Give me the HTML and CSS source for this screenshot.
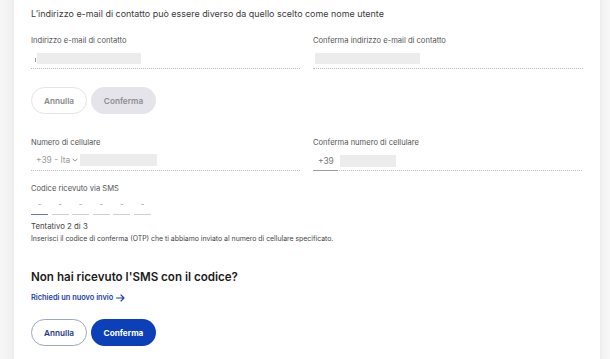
FILE: index.html
```html
<!DOCTYPE html>
<html lang="it">
<head>
<meta charset="utf-8">
<link rel="stylesheet" href="styles.css">
</head>
<body>
<div class="page">
  <div class="side-left"></div>
  <main class="card">
    <p class="intro">L’indirizzo e-mail di contatto può essere diverso da quello scelto come nome utente</p>

    <div class="row">
      <div class="field">
        <div class="label">Indirizzo e-mail di contatto</div>
        <div class="input"><span class="caret"></span><span class="mask mask-email"></span></div>
      </div>
      <div class="field">
        <div class="label">Conferma indirizzo e-mail di contatto</div>
        <div class="input"><span class="mask mask-email2"></span></div>
      </div>
    </div>

    <div class="actions first-actions">
      <button class="btn btn-outline-light">Annulla</button>
      <button class="btn btn-disabled">Conferma</button>
    </div>

    <div class="row phone-row">
      <div class="field">
        <div class="label">Numero di cellulare</div>
        <div class="input">
          <span class="prefix">+39 - Ita</span>
          <svg class="chev" width="6" height="4" viewBox="0 0 6 4"><path d="M0.5 0.7 L3 3.2 L5.5 0.7" fill="none" stroke="#888" stroke-width="0.9"/></svg>
          <span class="mask mask-phone"></span>
        </div>
      </div>
      <div class="field">
        <div class="label">Conferma numero di cellulare</div>
        <div class="input input-split">
          <span class="prefix prefix2">+39</span>
          <span class="mask mask-phone2"></span>
        </div>
      </div>
    </div>

    <div class="label sms-label">Codice ricevuto via SMS</div>
    <div class="otp">
      <span class="otp-box active">-</span>
      <span class="otp-box">-</span>
      <span class="otp-box">-</span>
      <span class="otp-box">-</span>
      <span class="otp-box">-</span>
      <span class="otp-box">-</span>
    </div>
    <div class="attempt">Tentativo 2 di 3</div>
    <div class="hint">Inserisci il codice di conferma (OTP) che ti abbiamo inviato al numero di cellulare specificato.</div>

    <h2 class="heading">Non hai ricevuto l'SMS con il codice?</h2>
    <div class="resend-wrap">
      <a class="resend" href="#">Richiedi un nuovo invio
        <svg width="9" height="8" viewBox="0 0 9 8"><path d="M0.5 4 H8 M5 1 L8 4 L5 7" fill="none" stroke="#1d3fa8" stroke-width="1.1" stroke-linecap="round" stroke-linejoin="round"/></svg>
      </a>
    </div>

    <div class="actions last-actions">
      <button class="btn btn-outline">Annulla</button>
      <button class="btn btn-primary">Conferma</button>
    </div>
  </main>
  <div class="side-right"></div>
</div>
</body>
</html>
```

FILE: styles.css
```css
* { box-sizing: border-box; }
html, body { margin: 0; padding: 0; }
body {
  width: 610px;
  height: 359px;
  overflow: hidden;
  font-family: Inter, "Noto Sans", "Liberation Sans", sans-serif;
  color: #333;
  background: #fff;
}
.page {
  display: flex;
  height: 359px;
}
.side-left {
  width: 14px;
  flex: none;
  background: linear-gradient(to right, #f7f7f7, #f1f1f1 80%, #ececec);
}
.side-right {
  width: 10px;
  flex: none;
  background: linear-gradient(to right, #ececec, #f4f4f4 40%, #f7f7f7);
}
.card {
  flex: 1;
  padding: 8px 0 0 17px;
}
.intro {
  margin: 0;
  font-size: 8.95px;
  line-height: 12px;
  color: #3a3a3a;
}
.row {
  display: grid;
  grid-template-columns: 269px 270px;
  column-gap: 13px;
  margin-top: 16px;
}
.label {
  font-size: 7.6px;
  line-height: 10px;
  color: #555;
}
.input {
  display: flex;
  align-items: center;
  height: 20px;
  margin-top: 3px;
  border-bottom: 1px dotted #bdbdbd;
  padding-bottom: 1px;
}
.caret {
  display: block;
  width: 1px;
  height: 4px;
  margin-left: 4px;
  margin-top: 3px;
  background: #999;
}
.mask {
  display: block;
  height: 11px;
  background: #ececec;
}
.mask-email { width: 104px; margin-left: 1px; }
.mask-email2 { width: 105px; margin-left: 2px; }
.actions {
  display: flex;
  gap: 4px;
}
.first-actions { margin-top: 18px; }
.btn {
  height: 27px;
  border-radius: 14px;
  font-family: Inter, "Noto Sans", "Liberation Sans", sans-serif;
  font-size: 8.2px;
  font-weight: 600;
  padding: 0;
  cursor: pointer;
}
.btn-outline-light {
  width: 56px;
  background: #fff;
  border: 1px solid #e4e4e4;
  color: #8a8a8a;
}
.btn-disabled {
  width: 65px;
  background: #e4e4ea;
  border: none;
  color: #8d8d95;
}
.phone-row { margin-top: 24px; }
.prefix {
  font-size: 8.4px;
  color: #9a9a9a;
  margin-left: 5px;
}
.chev { margin-left: 2px; margin-right: 2px; }
.mask-phone { width: 77px; height: 12px; }
.input-split {
  border-bottom: none;
  background-image:
    linear-gradient(#9c9c9c, #9c9c9c),
    linear-gradient(to right, #bdbdbd 50%, transparent 50%);
  background-size: 25px 1px, 2px 1px;
  background-position: 0 100%, 0 100%;
  background-repeat: no-repeat, repeat-x;
  padding-bottom: 1px;
}
.prefix2 { color: #777; margin-right: 6px; }
.mask-phone2 { width: 56px; height: 12px; }
.sms-label { margin-top: 13px; }
.otp {
  display: flex;
  gap: 3.6px;
  margin-top: 4px;
}
.otp-box {
  display: flex;
  align-items: flex-start;
  justify-content: center;
  width: 17px;
  height: 17px;
  font-size: 8px;
  line-height: 12px;
  color: #9a9a9a;
  border-bottom: 1px solid #cfcfcf;
}
.otp-box.active { border-bottom: 1px solid #6e74c4; }
.attempt {
  margin-top: 6px;
  font-size: 7.8px;
  line-height: 10px;
  color: #444;
}
.hint {
  margin-top: 3px;
  font-size: 6.9px;
  line-height: 10px;
  color: #444;
}
.heading {
  margin: 26px 0 0;
  font-size: 11.6px;
  line-height: 15px;
  font-weight: 600;
  color: #1c1c1c;
}
.resend-wrap {
  margin-top: 8px;
  height: 10px;
  display: flex;
}
.resend {
  display: flex;
  align-items: center;
  gap: 3px;
  font-size: 7.4px;
  line-height: 10px;
  font-weight: 600;
  color: #1d3fa8;
  text-decoration: none;
}
.last-actions { margin-top: 16px; }
.btn-outline {
  width: 56px;
  background: #fff;
  border: 1px solid #9aa6c8;
  color: #1e3a8a;
}
.btn-primary {
  width: 65px;
  background: #0b40b8;
  border: none;
  color: #fff;
  font-weight: 700;
}
```
